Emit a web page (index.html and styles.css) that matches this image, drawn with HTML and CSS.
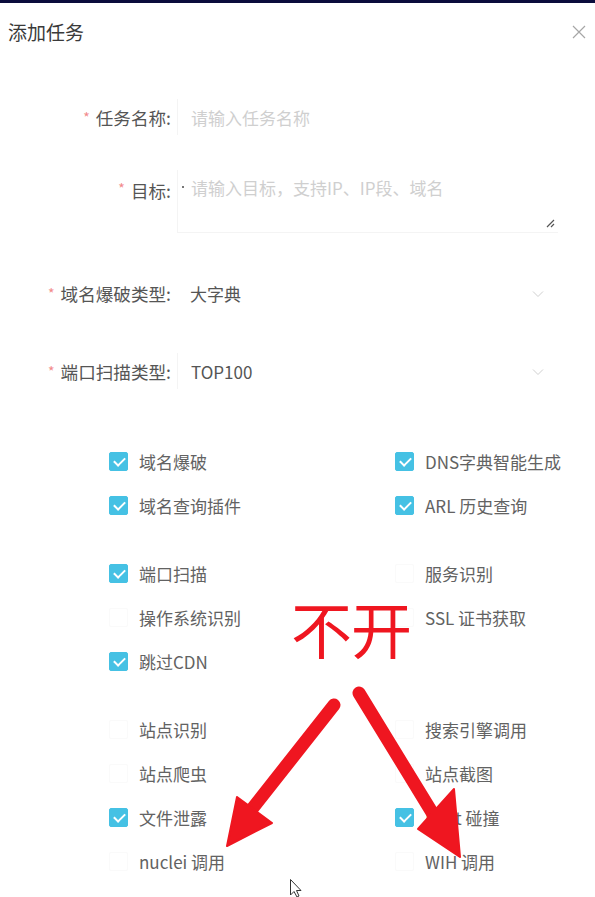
FILE: index.html
```html
<!DOCTYPE html>
<html lang="zh-CN">
<head>
<meta charset="utf-8">
<title>添加任务</title>
<link rel="stylesheet" href="styles.css">
</head>
<body>
<div class="topbar"></div>
<div class="modal">
  <div class="header">
    <div class="title">添加任务</div>
    <svg class="close" width="14" height="14" viewBox="0 0 14 14"><path d="M1 1L13 13M13 1L1 13" stroke="#a6a6a6" stroke-width="1.2" fill="none"/></svg>
  </div>

  <div class="form">
    <div class="row r1">
      <div class="label"><span class="req">*</span>任务名称:</div>
      <div class="control input"><span class="ph">请输入任务名称</span></div>
    </div>
    <div class="row r2">
      <div class="label top"><span class="req">*</span>目标:</div>
      <div class="control textarea">
        <span class="caret"></span><span class="ph">请输入目标，支持IP、IP段、域名</span>
        <svg class="resize" width="10" height="10" viewBox="0 0 10 10"><path d="M9 2L2 9M9 6L6 9" stroke="#555" stroke-width="1.2" fill="none"/></svg>
      </div>
    </div>
    <div class="row r3">
      <div class="label"><span class="req">*</span>域名爆破类型:</div>
      <div class="control select"><span class="val">大字典</span>
        <svg class="chev" width="12" height="8" viewBox="0 0 12 8"><path d="M1 1.5L6 6.5L11 1.5" stroke="#d0d0d0" stroke-width="1" fill="none"/></svg>
      </div>
    </div>
    <div class="row r4">
      <div class="label"><span class="req">*</span>端口扫描类型:</div>
      <div class="control select"><span class="val">TOP100</span>
        <svg class="chev" width="12" height="8" viewBox="0 0 12 8"><path d="M1 1.5L6 6.5L11 1.5" stroke="#d0d0d0" stroke-width="1" fill="none"/></svg>
      </div>
    </div>
  </div>

  <div class="checks">
    <div class="group">
      <div class="cb"><span class="box on"></span>域名爆破</div>
      <div class="cb"><span class="box on"></span>DNS字典智能生成</div>
      <div class="cb"><span class="box on"></span>域名查询插件</div>
      <div class="cb"><span class="box on"></span>ARL 历史查询</div>
    </div>
    <div class="group">
      <div class="cb"><span class="box on"></span>端口扫描</div>
      <div class="cb"><span class="box"></span>服务识别</div>
      <div class="cb"><span class="box"></span>操作系统识别</div>
      <div class="cb"><span class="box"></span>SSL 证书获取</div>
      <div class="cb"><span class="box on"></span>跳过CDN</div>
      <div class="cb"></div>
    </div>
    <div class="group">
      <div class="cb"><span class="box"></span>站点识别</div>
      <div class="cb"><span class="box"></span>搜索引擎调用</div>
      <div class="cb"><span class="box"></span>站点爬虫</div>
      <div class="cb"><span class="box"></span>站点截图</div>
      <div class="cb"><span class="box on"></span>文件泄露</div>
      <div class="cb"><span class="box on"></span>Host 碰撞</div>
      <div class="cb"><span class="box"></span>nuclei 调用</div>
      <div class="cb"><span class="box"></span>WIH 调用</div>
    </div>
  </div>
</div>

<div class="note">不开</div>
<svg class="arrows" width="595" height="897" viewBox="0 0 595 897">
  <g fill="#ef1620" stroke="#ef1620">
    <line x1="334" y1="705" x2="252" y2="809" stroke-width="13" stroke-linecap="round"/>
    <polygon points="227,846 237,797 272,823" stroke-width="2" stroke-linejoin="round"/>
    <line x1="359" y1="693" x2="433" y2="814" stroke-width="13" stroke-linecap="round"/>
    <polygon points="460,857 418,829 454,789" stroke-width="2" stroke-linejoin="round"/>
  </g>
  <path class="cursor" d="M290.5 879.5 L290.5 895 L294 891.5 L297 897 L299 896 L296.5 890.5 L301 890.5 Z" fill="#fff" stroke="#333" stroke-width="1"/>
</svg>
</body>
</html>
```

FILE: styles.css
```css
* { box-sizing: border-box; }
html, body { margin: 0; padding: 0; background: #fff; }
body {
  width: 595px;
  height: 897px;
  overflow: hidden;
  position: relative;
  font-family: "Noto Sans CJK SC", "Noto Sans", sans-serif;
  color: #595959;
}
.topbar { height: 3px; background: #0b0c3c; }
.modal { width: 595px; }
.header {
  height: 56px;
  display: flex;
  align-items: center;
  justify-content: space-between;
  padding: 0 9px 0 8px;
}
.title { font-size: 19px; color: #3a3a3a; line-height: 1; }
.close { display: block; margin-top: 2px; }

.form { padding-top: 40px; }
.row { display: flex; }
.label {
  width: 172px;
  flex: none;
  display: flex;
  align-items: center;
  justify-content: flex-end;
  font-size: 17.6px;
  color: #555;
  padding-right: 1px;
}
.label.top { align-items: flex-start; padding-top: 8px; }
.req { color: #f28a8a; font-size: 14px; margin-right: 6px; }
.control {
  margin-left: 5px;
  width: 381px;
  position: relative;
  display: flex;
  align-items: center;
  padding-left: 13px;
  font-size: 17px;
}
.input { height: 36px; border-left: 1px solid #f4f4f4; }
.textarea {
  height: 63px;
  align-items: flex-start;
  padding-top: 5px;
  border-left: 1px solid #f4f4f4;
  border-bottom: 1px solid #f4f4f4;
}
.select { height: 36px; justify-content: space-between; padding-right: 14px; }
.r4 .select { border-left: 1px solid #f4f4f4; }
.chev { margin-top: 2px; }
.ph { color: #cfcfcf; }
.val { color: #555; }
.caret {
  width: 2px; height: 2px; background: #777;
  margin-left: -9px; margin-right: 7px; margin-top: 11px;
  flex: none;
}
.resize { position: absolute; right: 3px; bottom: 4px; }
.r1 { margin-bottom: 35px; }
.r2 { margin-bottom: 42px; }
.r3 { margin-bottom: 42px; }

.checks { padding: 50px 0 0 109px; }
.group {
  display: grid;
  grid-template-columns: 286px 190px;
  grid-auto-rows: 44px;
  margin-bottom: 24px;
}
.cb {
  display: flex;
  align-items: center;
  font-size: 17px;
  color: #626262;
}
.box {
  width: 19px; height: 19px;
  border-radius: 2px;
  margin-right: 11px;
  flex: none;
  border: 1px solid #fafafa;
  background: #fff;
  position: relative;
}
.box.on { background: #45c1e4; border-color: #45c1e4; }
.box.on::after {
  content: "";
  position: absolute;
  left: 6px; top: 2.5px;
  width: 5px; height: 9px;
  border-right: 2px solid #fff;
  border-bottom: 2px solid #fff;
  transform: rotate(45deg);
}

.note {
  position: absolute;
  left: 291px;
  top: 597px;
  font-size: 61px;
  font-weight: 400;
  line-height: 61px;
  color: #ef1620;
  letter-spacing: -1px;
}
.arrows { position: absolute; left: 0; top: 0; pointer-events: none; }
```
